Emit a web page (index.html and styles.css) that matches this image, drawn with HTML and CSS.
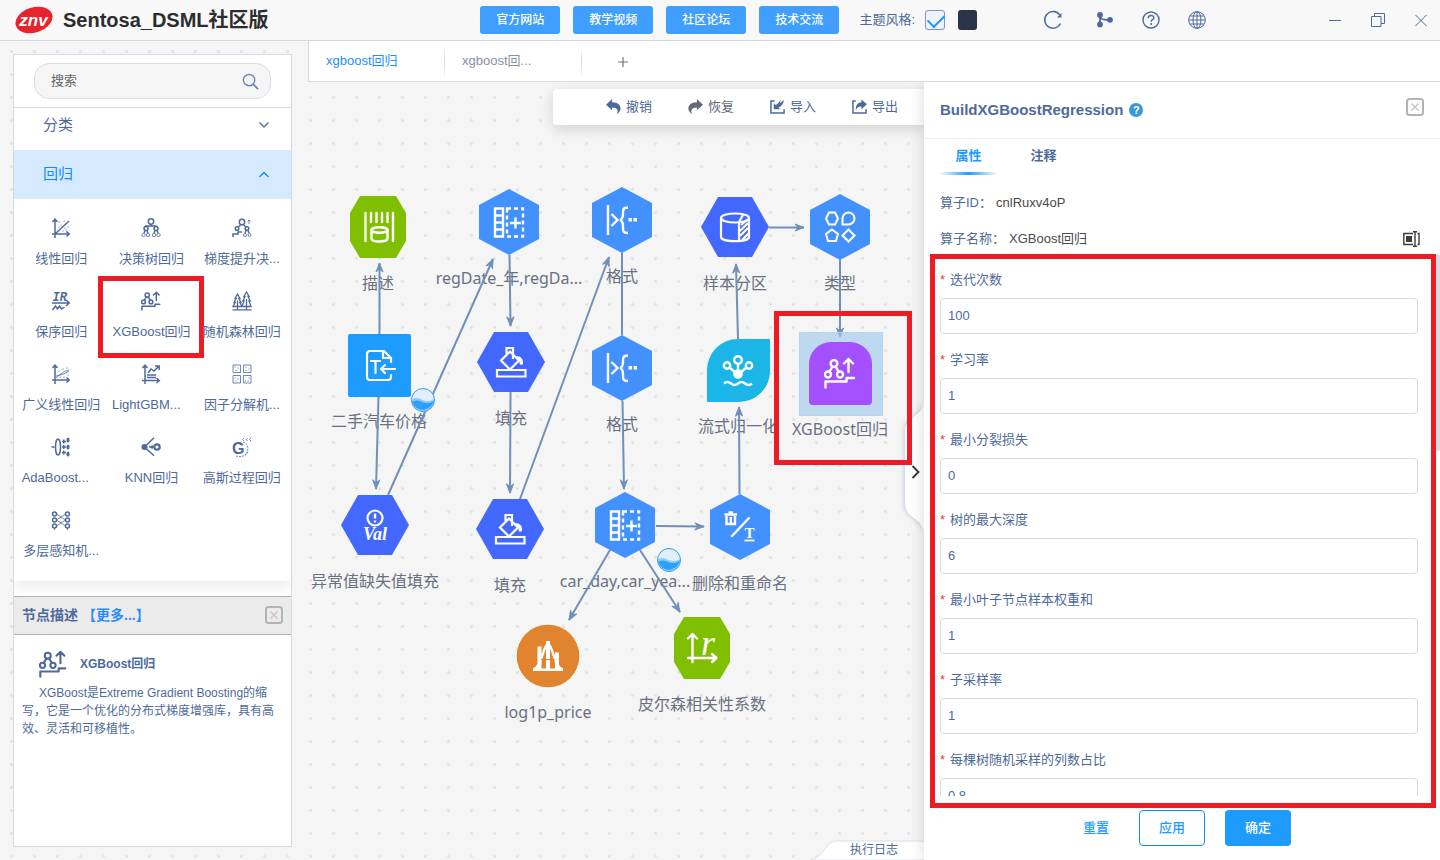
FILE: index.html
```html
<!DOCTYPE html>
<html lang="zh-CN">
<head>
<meta charset="utf-8">
<title>Sentosa_DSML社区版</title>
<link rel="stylesheet" href="styles.css">
</head>
<body>
<svg class="sprite" aria-hidden="true">
  <symbol id="i-xgb" viewBox="-16 -16 32 32"><g fill="none" stroke="currentColor" stroke-width="2.4" stroke-linecap="round" stroke-linejoin="round"><circle cx="-6" cy="-9.5" r="3.4"/><circle cx="-12" cy="1.5" r="3"/><circle cx="0" cy="1.5" r="3"/><path d="M-7.500-6.500l-3 5M-4.500-6.500l3 5M8.500-1v-13M4-9.500l4.500-4.500 4.500 4.500M-14.500 14.500v-6h21V5H14"/></g></symbol>
  <symbol id="i-cols" viewBox="-16 -16 32 32"><g fill="none" stroke="currentColor" stroke-width="2.4"><path d="M-14-13.500h8v28h-8zM-14-6.500h8M-14 .5h8M-14 7.500h8M6.500-4.500v11M1 1h11"/><path stroke-dasharray="4 3" d="M-2-13.500h16v28H-2z"/></g></symbol>
  <symbol id="i-format" viewBox="-16 -16 32 32"><g fill="none" stroke="currentColor" stroke-width="2.400"><path d="M-14-15v30M-10.500-6l6 6-6 6M6-12.500c-5 0-5 2-5 6 0 4-1 6-3 6.500 2 .5 3 2.500 3 7s0 6 5 6"/></g><path fill="currentColor" d="M6.500-2H10v3.500H6.500zM11.500-2H15v3.500h-3.500z"/></symbol>
  <symbol id="i-bucket" viewBox="-16 -16 32 32"><g fill="none" stroke="currentColor" stroke-width="2.200"><path d="M-14 8h28.500v6.500H-14zM-1-10.500l9 9-9 9-9-9zM-4.500-8v-6h6.500V-3"/></g><path fill="currentColor" d="M5-6c5 0 7.500 3 7 8-2 1.500-4 1-3.500-3z"/></symbol>
  <symbol id="i-close" viewBox="0 0 18 18"><rect x="1" y="1" width="16" height="16" rx="2.500" fill="none" stroke="#b3b3b3" stroke-width="2"/><path d="M5.500 5.500l7 7m0-7l-7 7" stroke="#d3c3c3" stroke-width="1.500"/></symbol>
</svg>

<header class="topbar">
  <div class="brand">
    <svg class="brand-logo" viewBox="0 0 38 30" role="img" aria-label="znv"><ellipse cx="19" cy="15" rx="19" ry="12.500" transform="rotate(-17 19 15)" fill="#e8232b"/><text x="18.500" y="20.500" text-anchor="middle" class="logo-text">znv</text></svg>
    <h1 class="brand-name">Sentosa_DSML社区版</h1>
  </div>
  <nav class="links">
    <button class="link-btn">官方网站</button><button class="link-btn">教学视频</button><button class="link-btn">社区论坛</button><button class="link-btn">技术交流</button>
  </nav>
  <div class="theme">
    <label for="theme-light">主题风格:</label>
    <input class="theme-check" id="theme-light" type="checkbox" checked>
    <button class="theme-dark" aria-label="深色主题"></button>
  </div>
  <div class="tools">
    <button class="icon-btn" aria-label="刷新"><svg viewBox="0 0 20 20"><path d="M17.500 13.500A8.300 8.300 0 1 1 16.800 5" fill="none" stroke="currentColor" stroke-width="1.500"/><path d="M18.500 3v4.500H14z" fill="currentColor"/></svg></button>
    <button class="icon-btn" aria-label="流程"><svg viewBox="0 0 20 20"><g fill="currentColor"><circle cx="5" cy="5" r="2.900"/><circle cx="5" cy="14.500" r="2.900"/><circle cx="15" cy="9.800" r="2.900"/></g><path d="M5 5v9.500M5 7c1 2.500 4 3 9 2.800" fill="none" stroke="currentColor" stroke-width="1.800"/></svg></button>
    <button class="icon-btn" aria-label="帮助"><svg viewBox="0 0 20 20"><circle cx="10" cy="10" r="8" fill="none" stroke="currentColor" stroke-width="1.400"/><path d="M7.300 8.200c0-3.800 5.500-3.500 5.500-.5 0 2-2.700 2-2.700 4" fill="none" stroke="currentColor" stroke-width="1.500"/><circle cx="10.100" cy="14" r="1" fill="currentColor"/></svg></button>
    <button class="icon-btn" aria-label="语言"><svg viewBox="0 0 20 20"><g fill="none" stroke="currentColor"><circle cx="10" cy="10" r="8.300"/><ellipse cx="10" cy="10" rx="4" ry="8.300"/><path d="M10 1.700v16.600M1.700 10h16.600M3 6h14M3 14h14"/></g></svg></button>
  </div>
  <div class="window">
    <button class="win-btn" aria-label="最小化"><svg viewBox="0 0 14 14"><path d="M1 7.500h12" stroke="currentColor"/></svg></button>
    <button class="win-btn" aria-label="还原"><svg viewBox="0 0 14 14"><path d="M.5 3.500h9.500v10H.5zM3.500 3.500v-3h10v10H10" fill="none" stroke="currentColor"/></svg></button>
    <button class="win-btn" aria-label="关闭"><svg viewBox="0 0 14 14"><path d="M1.500 2l11 11m0-11l-11 11" stroke="currentColor"/></svg></button>
  </div>
</header>

<main class="layout">
  <aside class="side">
    <div class="side-card">
      <div class="search">
        <div class="search-box"><input type="text" aria-label="搜索" placeholder="搜索"><svg viewBox="0 0 18 18"><circle cx="7.500" cy="7.500" r="6" fill="none" stroke="#6a86b5" stroke-width="1.500"/><path d="M12 12l5 5" stroke="#6a86b5" stroke-width="2"/></svg></div>
      </div>
      <button class="group"><span>分类</span><svg viewBox="0 0 12 12"><path d="M1.500 3.500L6 8l4.500-4.500" fill="none" stroke="currentColor" stroke-width="1.300"/></svg></button>
      <button class="group group--open"><span>回归</span><svg viewBox="0 0 12 12"><path d="M1.500 9L6 4.500 10.500 9" fill="none" stroke="currentColor" stroke-width="1.300"/></svg></button>
      <ul class="ops">
        <li class="op"><svg viewBox="0 0 20 20"><path class="ln" d="M4 20V1.500M1.500 4L4 1.200 6.500 4M1 16h17M15.500 13.500L18.300 16l-2.800 2.500M4 16L18 3"/><path class="dots" d="M8 4h.1M10 7h.1M13 3h.1M8 9h.1M12 13h.1M15 12h.1M17 9h.1M14 10h.1"/></svg><span class="op-name">线性回归</span></li>
        <li class="op"><svg viewBox="0 0 20 20"><g class="ln"><circle cx="10" cy="3.500" r="2.700"/><circle cx="5" cy="10.500" r="2"/><circle cx="15" cy="10.500" r="2"/><path d="M10 6v2H5v1M10 8h5v1M4 12.500l-1 2.500M6 12.500L7 15M14 12.500L13 15M16 12.500l1 2.500"/></g><g class="thin"><circle cx="2.500" cy="17" r="1.700"/><circle cx="7" cy="17" r="1.700"/><circle cx="13" cy="17" r="1.700"/><circle cx="17.500" cy="17" r="1.700"/></g></svg><span class="op-name">决策树回归</span></li>
        <li class="op"><svg viewBox="0 0 20 20"><g class="ln"><circle cx="10" cy="4" r="2.700"/><circle cx="5" cy="10.500" r="1.800"/><circle cx="15" cy="10.500" r="1.800"/><path d="M9 6.500L6 9M11 6.500L14 9M1 19v-3h5v-2h4M14 12.500L13 15M16 12.500l1 2.500"/></g><g class="thin"><circle cx="13" cy="17" r="1.500"/><circle cx="17.500" cy="17" r="1.500"/><path d="M17 6V2M15.500 3.500L17 2l1.500 1.500"/></g></svg><span class="op-name">梯度提升决...</span></li>
        <li class="op"><svg viewBox="0 0 20 20"><text x="1.500" y="9.500" class="ir">IR</text><path class="ln" d="M1 12h17M15 9l3.300 3L15 15M1.500 19l3-4 2 3 2-3 2 3 3-2"/></svg><span class="op-name">保序回归</span></li>
        <li class="op op--marked"><svg viewBox="-16 -16 32 32"><use href="#i-xgb" x="-16" y="-16" width="32" height="32"/></svg><span class="op-name">XGBoost回归</span></li>
        <li class="op"><svg viewBox="0 0 20 20"><path class="fir" d="M5.500 3L3 7.500h1.200L2 11.500h1.200L1 15.500h9L7.800 11.500H9L6.800 7.500H8zM14.500 1l-2.700 4.500h1.200L10.800 10H12l-2 5.500h9L17 10h1.200L16 5.500h1.200zM5.500 9.500v9M14.500 8v10.500M.5 18.800h19"/></svg><span class="op-name">随机森林回归</span></li>
        <li class="op"><svg viewBox="0 0 20 20"><path class="ln" d="M4 20V1.500M1.500 4L4 1.200 6.500 4M1 16h17M15.500 13.500L18.300 16l-2.800 2.500"/><path class="thin" d="M5 12c5-1 9-2 13-5M5 14c4-4 8-7 13-8"/><path class="dots" d="M8 7h.1M12 5h.1M16 4h.1M9 13h.1M13 13h.1M17 11h.1"/></svg><span class="op-name">广义线性回归</span></li>
        <li class="op"><svg viewBox="0 0 20 20"><path class="ln" d="M4 20V1.500M1.500 4L4 1.200 6.500 4M1 16.500h17M15.500 14l2.800 2.500-2.800 2.500M7 9l3-4 3 2 5-5M14 2h4.200v4M6 11h9M6 13.500h9"/></svg><span class="op-name op-name--cut">LightGBM...</span></li>
        <li class="op"><svg viewBox="0 0 20 20"><path class="thin" d="M1 1h7.500v7.500H1zM11.500 1H19v7.500h-7.500zM1 11.500h7.500V19H1zM11.500 11.500H19V19h-7.500z"/><path class="dots" d="M3 3h.1M6 4h.1M4 6.500h.1M14 3h.1M17 5h.1M14 6.500h.1M3 14h.1M6 15h.1M4 17h.1M13.500 17h.1M17 14h.1M16 17h.1"/></svg><span class="op-name">因子分解机...</span></li>
        <li class="op"><svg viewBox="0 0 20 20"><ellipse class="ln" cx="7" cy="10" rx="2.500" ry="8"/><path class="ln" d="M.5 10h3M11 4.500h4M11 10h4M11 15.500h4"/><path class="blob" d="M12 2.500h1.500v4H12zM12 8h1.500v4H12zM12 13.500h1.500v4H12z"/><g class="blob"><ellipse cx="17" cy="3" rx="1.600" ry="2.500"/><ellipse cx="17" cy="10" rx="1.600" ry="2.500"/><ellipse cx="17" cy="17" rx="1.600" ry="2.500"/></g></svg><span class="op-name op-name--cut">AdaBoost...</span></li>
        <li class="op"><svg viewBox="0 0 20 20"><circle class="blob" cx="3.500" cy="10" r="3"/><path class="ln" d="M3.500 10L13 .8M3.500 10l9.500 8.700M8 10h4M10.500 8.500L12 10l-1.500 1.500"/><circle cx="16" cy="10" r="2.700" fill="none" stroke="currentColor" stroke-width="2.200"/></svg><span class="op-name">KNN回归</span></li>
        <li class="op"><svg viewBox="0 0 20 20"><text x="0" y="17" class="gp">G</text><path class="thin" stroke-dasharray="2 1" d="M11 5c5 1 7 8 2 13M4 19c4 1 9 1 12-4"/><path class="thin" d="M12 1l-1.500 1.500L12 4M15.500 1L14 2.500 15.500 4M19 1l-1.500 1.500L19 4"/></svg><span class="op-name">高斯过程回归</span></li>
        <li class="op"><svg viewBox="0 0 20 20"><g class="ln"><circle cx="3.500" cy="4" r="2"/><circle cx="3.500" cy="10" r="2"/><circle cx="3.500" cy="16" r="2"/><circle cx="16.500" cy="4" r="2"/><circle cx="16.500" cy="10" r="2"/><circle cx="16.500" cy="16" r="2"/></g><path class="thin" d="M5.500 4l9 6M5.500 10l9-6M5.500 10l9 6M5.500 16l9-6M3.500 18v2M16.500 18v2"/></svg><span class="op-name">多层感知机...</span></li>
      </ul>
      <section class="about">
        <div class="about-head"><h2>节点描述</h2><a href="#more">【更多...】</a><button class="close-btn" aria-label="关闭描述"><svg viewBox="0 0 18 18"><use href="#i-close"/></svg></button></div>
        <div class="about-name"><svg viewBox="0 0 32 32"><use href="#i-xgb"/></svg><strong>XGBoost回归</strong></div>
        <p class="about-text">XGBoost是Extreme Gradient Boosting的缩写，它是一个优化的分布式梯度增强库，具有高效、灵活和可移植性。</p>
      </section>
    </div>
  </aside>

  <section class="work">
    <nav class="tabs">
      <button class="tab tab--on">xgboost回归</button>
      <button class="tab">xgboost回...</button>
      <button class="tab-add" aria-label="新建"><svg viewBox="0 0 12 12"><path d="M6 1v10M1 6h10" stroke="currentColor" stroke-width="1.200"/></svg></button>
    </nav>
    <div class="stage">
      <div class="canvas">
        <div class="toolbar">
          <button class="act"><svg viewBox="0 0 16 16"><path fill="currentColor" d="M0 6l6.500-6v3.500C13 3.500 16 7 15.500 11c-.3 2.500-2 4-4 5 2-3.500 1-7-5-7V12z"/></svg>撤销</button>
          <button class="act act--grey"><svg viewBox="0 0 16 16"><path fill="currentColor" d="M16 6L9.500 0v3.500C3 3.500 0 7 .5 11c.3 2.500 2 4 4 5-2-3.500-1-7 5-7V12z"/></svg>恢复</button>
          <button class="act"><svg viewBox="0 0 16 16"><path fill="none" stroke="currentColor" stroke-width="1.600" d="M5 2H1v13h14v-4"/><path fill="currentColor" d="M4 11V4.500l2 2C8 5.500 10 3.500 11 1c0 2 0 2.500-.5 3.500L15 1c-.5 4-3 7-6 8l2 2z"/></svg>导入</button>
          <button class="act"><svg viewBox="0 0 16 16"><path fill="none" stroke="currentColor" stroke-width="1.600" d="M4 2H1v13h14v-4"/><path fill="currentColor" d="M16 5.500L10 .5V3.500C5.500 4 4 7 4 12c1.500-3 3-4 6-4v3z"/></svg>导出</button>
        </div>

        <div class="node n-desc"><svg viewBox="-35 -35 70 70"><path fill="#7fbf00" d="M-18-31h36l10 17v28L18 31h-36l-10-17v-28z"/><g fill="none" stroke="#fff" stroke-width="2.400" stroke-linecap="round"><path d="M-12.500-14v28M15-14v28M-7-14v9M-1.500-14v9M4-14v9M9.500-14v9"/><ellipse cx="1.500" cy="3" rx="8" ry="2.800"/><path d="M-6.500 3v8.500c0 4 16 4 16 0V3"/></g></svg><span>描述</span></div>
        <div class="node n-reg"><svg viewBox="-35 -35 70 70"><path fill="#4391ff" d="M0-33l30 16v34L0 33l-30-16v-34z"/><use href="#i-cols" x="-16" y="-16" width="32" height="32"/></svg><span>regDate_年,regDa...</span></div>
        <div class="node n-fmt1"><svg viewBox="-35 -35 70 70"><path fill="#4391ff" d="M0-33l30 16v34L0 33l-30-16v-34z"/><use href="#i-format" x="-16" y="-16" width="32" height="32"/></svg><span>格式</span></div>
        <div class="node n-split"><svg viewBox="-35 -35 70 70"><path fill="#4368ff" d="M-17-30h34l17 30-17 30h-34l-17-30z"/><g fill="none" stroke="#fff" stroke-width="2.200"><ellipse cy="-9" rx="14" ry="4.500"/><path d="M-14-9v19c0 5.500 28 5.500 28 0V-9M4-5v18.500M4-5l4-7M5 4l8-8M5 9l8-8M7 13l7-7M6-2l6-5"/></g></svg><span>样本分区</span></div>
        <div class="node n-type"><svg viewBox="-35 -35 70 70"><path fill="#4391ff" d="M0-33l30 16v34L0 33l-30-16v-34z"/><g fill="none" stroke="#fff" stroke-width="2"><path d="M-11-14.500h6l3 6-3 6h-6l-3-6zM2.500-2.500V-9a6 6 0 1 1 6 6.500zM-8 2.500l6 4.500-2 7h-8l-2-7zM8.500 2.500l6 6-6 6-6-6z"/></g></svg><span>类型</span></div>
        <div class="node n-csv"><svg viewBox="-35 -35 70 70"><rect x="-31" y="-31" width="63" height="63" rx="2" fill="#1e9bff"/><g fill="none" stroke="#fff" stroke-width="2.200" stroke-linecap="round" stroke-linejoin="round"><path d="M12-3v-4l-7-7h-14q-3 0-3 3v23q0 3 3 3h18q3 0 3-3v-2M4-14v7h8M-8-4h9M-3.500-4V8M16 4H2M6 0L2 4l4 4"/></g></svg><span>二手汽车价格</span></div>
        <div class="node n-fill1"><svg viewBox="-35 -35 70 70"><path fill="#4368ff" d="M-17-30h34l17 30-17 30h-34l-17-30z"/><use href="#i-bucket" x="-16" y="-16" width="32" height="32"/></svg><span>填充</span></div>
        <div class="node n-fmt2"><svg viewBox="-35 -35 70 70"><path fill="#4391ff" d="M0-33l30 16v34L0 33l-30-16v-34z"/><use href="#i-format" x="-16" y="-16" width="32" height="32"/></svg><span>格式</span></div>
        <div class="node n-norm"><svg viewBox="-35 -35 70 70"><path fill="#1cb5e8" d="M0-31h32V0A31 31 0 0 1 1 32h-32V0A31 31 0 0 1 0-31z"/><g fill="none" stroke="#fff" stroke-width="2.400"><circle cy="-10" r="3.800"/><circle cx="-11" cy="-4.500" r="3.200"/><circle cx="11" cy="-4.500" r="3.200"/><path d="M0-6v8M-8-2l6 5M8-2L2 3M-14 13.500q3.500-3 7 0t7 0 7 0 7 0"/></g><circle cy="4" r="4.800" fill="#fff"/></svg><span>流式归一化</span></div>
        <div class="node n-val"><svg viewBox="-35 -35 70 70"><path fill="#4368ff" d="M-17-30h34l17 30-17 30h-34l-17-30z"/><circle cy="-7" r="7.500" fill="none" stroke="#fff" stroke-width="2.200"/><path d="M0-11.500v5M0-4.500v2" stroke="#fff" stroke-width="2.400"/><text y="15" text-anchor="middle" class="val">Val</text></svg><span>异常值缺失值填充</span></div>
        <div class="node n-fill2"><svg viewBox="-35 -35 70 70"><path fill="#4368ff" d="M-17-30h34l17 30-17 30h-34l-17-30z"/><use href="#i-bucket" x="-16" y="-16" width="32" height="32"/></svg><span>填充</span></div>
        <div class="node n-car"><svg viewBox="-35 -35 70 70"><path fill="#4391ff" d="M0-33l30 16v34L0 33l-30-16v-34z"/><use href="#i-cols" x="-16" y="-16" width="32" height="32"/></svg><span>car_day,car_yea...</span></div>
        <div class="node n-drop"><svg viewBox="-35 -35 70 70"><path fill="#4391ff" d="M0-33l30 16v34L0 33l-30-16v-34z"/><path d="M9-9L-8 9" stroke="#fff" stroke-width="2.400" stroke-linecap="round"/><path fill="none" stroke="#fff" stroke-width="2.400" d="M-15.500-12.500h12.500M-11.500-14.500h4.500M-13.500-11v8h8.500v-8M-9.200-10v6"/><text x="9.500" y="11" text-anchor="middle" class="tee">T</text><path stroke="#fff" stroke-width="1.800" d="M4.500 13.500h10"/></svg><span>删除和重命名</span></div>
        <div class="node n-log"><svg viewBox="-35 -35 70 70"><circle r="31.300" fill="#e08430"/><path fill="#fff" d="M-10.500-9.500h4V14h-4zM-2-15h4v29h-4zM7-3.500h4V14H7zM-15 12.500h30V15h-30z"/><path fill="none" stroke="#fff" stroke-width="2.400" d="M-14.500 13.500C-6 11-6-8 0-12.500 6-8 6 11 14.500 13.500"/><path d="M-7 3.500H7" stroke="#e08430"/></svg><span>log1p_price</span></div>
        <div class="node n-corr"><svg viewBox="-35 -35 70 70"><path fill="#7fbf00" d="M-18-31h36l10 17v28L18 31h-36l-10-17v-28z"/><path fill="none" stroke="#fff" stroke-width="2.400" stroke-linecap="round" stroke-linejoin="round" d="M-9.500 14v-28M-14-9.500l4.500-4.500 4.500 4.500M-14 10h28M10 6l4.500 4-4.500 4"/><text x="6" y="7" text-anchor="middle" class="rr">r</text></svg><span>皮尔森相关性系数</span></div>

        <svg class="edges" aria-hidden="true">
          <defs><marker id="tip" viewBox="0 0 12 10" refX="10.500" refY="5" markerWidth="12" markerHeight="10" markerUnits="userSpaceOnUse" orient="auto"><path d="M1.500 1.500L10.500 5l-9 3.500L4.500 5z" fill="#7090b8" stroke="#7090b8" stroke-linejoin="round"/></marker></defs>
          <g transform="translate(-308 -82)" fill="none" stroke="#7090b8" stroke-width="2">
            <path marker-end="url(#tip)" d="M379.500 334V263"/><path marker-end="url(#tip)" d="M378.500 397L376 489"/><path marker-end="url(#tip)" d="M388 495L493 259"/><path marker-end="url(#tip)" d="M509.500 255L510.500 326"/><path marker-end="url(#tip)" d="M510.500 392L510 493"/><path marker-end="url(#tip)" d="M520 499L609 257"/><path d="M622 253V335"/><path marker-end="url(#tip)" d="M622.500 401L624 489"/><path marker-end="url(#tip)" d="M656 526L704 526.500"/><path marker-end="url(#tip)" d="M739.500 494L739 407"/><path marker-end="url(#tip)" d="M738 339L736 264"/><path marker-end="url(#tip)" d="M769 227.500H804"/><path marker-end="url(#tip)" d="M840 260V337"/><path marker-end="url(#tip)" d="M610 550L569 620"/><path marker-end="url(#tip)" d="M640 550L680 612"/>
          </g>
        </svg>

        <div class="node node--picked n-xgb"><svg viewBox="-35 -35 70 70"><path fill="#a450ff" d="M-9-31H10A22 22 0 0 1 32-9V28q0 4-4 4h-55q-4 0-4-4V-9A22 22 0 0 1-9-31z"/><use href="#i-xgb" x="-16" y="-16" width="32" height="32"/></svg><span>XGBoost回归</span></div>
        <svg class="water w-one" viewBox="0 0 26 26"><g id="water"><circle cx="13" cy="13" r="11.500" fill="#e2eef9"/><path d="M1.500 13c4-3 7-2 11 0s8 1 12-1a11.500 11.500 0 0 1-23 1z" fill="#90c9f9"/><path d="M2 15c3-2 6-2 10 0s9 1 12-1a11.500 11.500 0 0 1-22 1z" fill="#2aa0fb"/><circle cx="13" cy="13" r="11.500" fill="none" stroke="#2aa0fb"/></g></svg>
        <svg class="water w-two" viewBox="0 0 26 26"><use href="#water"/></svg>

        <button class="log-tab"><svg viewBox="0 0 120 20" preserveAspectRatio="none"><path d="M0 20C10 18 14 10 18 5c2-3 5-4 8-4h82c6 0 8 2 12 6v13z" fill="#fff" stroke="#dcdfec"/></svg><span>执行日志</span></button>
        <button class="fold" aria-label="收起面板"><svg viewBox="0 0 20 132"><path d="M20 1C18 16 1 16 1 30v73c0 14 17 14 19 28z" fill="#fff"/><path d="M8.500 65l6 6-6 6" fill="none" stroke="#333" stroke-width="1.800"/></svg></button>
        <div class="mark mark--node"></div>
      </div>

      <aside class="panel">
        <div class="panel-head"><h2>BuildXGBoostRegression</h2><button class="help" aria-label="说明">?</button><button class="close-btn" aria-label="关闭面板"><svg viewBox="0 0 18 18"><use href="#i-close"/></svg></button></div>
        <div class="panel-tabs"><button class="ptab ptab--on">属性</button><button class="ptab">注释</button></div>
        <dl class="facts">
          <div><dt>算子ID：</dt><dd>cnlRuxv4oP</dd></div>
          <div><dt>算子名称：</dt><dd>XGBoost回归</dd><button class="rename" aria-label="重命名"><svg viewBox="0 0 18 16"><path d="M11 2.500H1.800v11H11M15.500 2.500H17v11h-1.500M13 1v14M11 .8h4M11 15.200h4" fill="none" stroke="#3c3c3c" stroke-width="1.400"/><path d="M4 5h6v6H4z" fill="#3c3c3c"/></svg></button></div>
        </dl>
        <form class="form" id="props">
          <div class="field"><label for="f1">迭代次数</label><input id="f1" type="text" value="100"></div>
          <div class="field"><label for="f2">学习率</label><input id="f2" type="text" value="1"></div>
          <div class="field"><label for="f3">最小分裂损失</label><input id="f3" type="text" value="0"></div>
          <div class="field"><label for="f4">树的最大深度</label><input id="f4" type="text" value="6"></div>
          <div class="field"><label for="f5">最小叶子节点样本权重和</label><input id="f5" type="text" value="1"></div>
          <div class="field"><label for="f6">子采样率</label><input id="f6" type="text" value="1"></div>
          <div class="field"><label for="f7">每棵树随机采样的列数占比</label><input id="f7" type="text" value="0.8"></div>
        </form>
        <div class="panel-foot"><button class="btn btn--text">重置</button><button class="btn btn--line">应用</button><button class="btn btn--fill">确定</button></div>
        <div class="scroll-thumb"></div>
        <div class="mark mark--form"></div>
      </aside>
    </div>
  </section>
</main>
</body>
</html>
```
FILE: styles.css
```css
* { box-sizing: border-box; }

body {
  margin: 0;
  height: 100vh;
  overflow: hidden;
  display: flex;
  flex-direction: column;
  font: 13px/20px "Liberation Sans", "Noto Sans CJK SC", sans-serif;
  color: #4e6a9c;
  background: #f5f5f5 radial-gradient(circle, #e3e3e3 1px, transparent 2px) 0 -6px / 23px 23px;
}

button, input { font: inherit; color: inherit; }
button { padding: 0; border: 0; background: none; cursor: pointer; }
h1, h2, p, ul, dl, dd { margin: 0; padding: 0; }
a { text-decoration: none; }
svg { display: block; flex: none; }
.sprite { position: absolute; width: 0; height: 0; }

/* top bar */
.topbar {
  flex: none;
  height: 41px;
  display: flex;
  align-items: center;
  padding: 0 12px 0 15px;
  background: #f8f8f8;
  border-bottom: 1px solid #d5d8e3;
}
.brand { display: flex; align-items: center; gap: 10px; }
.brand-logo { width: 38px; height: 30px; }
.logo-text { font: italic bold 17px "Liberation Sans", sans-serif; fill: #fff; }
.brand-name { font-size: 20px; line-height: 28px; color: #2d2d2d; }
.links { display: flex; gap: 13px; margin-left: auto; }
.link-btn { width: 80px; height: 28px; border-radius: 3px; background: #409eff; color: #fff; font-size: 12px; font-weight: 500; }
.theme { display: flex; align-items: center; margin-left: 20px; }
.theme-check {
  appearance: none;
  width: 20px;
  height: 20px;
  margin: 0 13px 0 10px;
  border: 1px solid #7f95bb;
  border-radius: 3px;
  background: #eef2fb;
}
.theme-check::after {
  content: "";
  display: block;
  width: 14px;
  height: 8px;
  margin: 3px 0 0 2px;
  border: solid #1e9bff;
  border-width: 0 0 2px 2px;
  transform: rotate(-45deg);
}
.theme-dark { width: 19px; height: 20px; border-radius: 3px; background: #2b3348; }
.tools { display: flex; gap: 26px; margin-left: 66px; }
.icon-btn:first-child { margin-right: 6px; }
.icon-btn svg { width: 20px; height: 20px; }
.window { display: flex; gap: 29px; margin-left: 121px; }
.win-btn svg { width: 14px; height: 14px; }

/* page columns */
.layout { flex: 1; min-height: 0; display: grid; grid-template: minmax(0, 1fr) / 308px 1fr; }
.side { padding: 13px 16px 13px 13px; min-height: 0; display: flex; }
.side-card { flex: 1; display: flex; flex-direction: column; background: #fff; border: 1px solid #d5d9e5; }
.search { padding: 8px 20px; border-bottom: 1px solid #d5d9e5; }
.search-box {
  height: 36px;
  display: flex;
  align-items: center;
  padding: 0 11px 0 16px;
  border: 1px solid #d9dbe8;
  border-radius: 15px;
  background: #f5f5f5;
}
.search-box input { flex: 1; min-width: 0; padding: 0; border: 0; outline: 0; background: none; }
.search-box input::placeholder { color: #666; }
.search-box svg { width: 17px; height: 17px; }
.group {
  flex: none;
  display: flex;
  align-items: center;
  justify-content: space-between;
  height: 42px;
  padding: 0 21px 8px 29px;
  font-size: 15px;
}
.group svg { width: 12px; height: 12px; }
.group--open { height: 49px; padding-bottom: 2px; background: #d6eaff; color: #0d8cff; }
.ops {
  list-style: none;
  display: grid;
  grid-template-columns: repeat(3, 1fr);
  padding: 0 4px 17px 2px;
  box-shadow: 0 6px 14px rgba(0, 0, 0, .08);
  clip-path: inset(0 0 -15px 0);
  margin-bottom: 15px;
}
.op { position: relative; display: flex; flex-direction: column; align-items: center; gap: 11px; padding: 19px 0 3px; }
.op svg { width: 20px; height: 20px; }
.op-name { width: 79px; white-space: nowrap; text-align: center; }
.op-name--cut { text-align: left; }
.op--marked::after { content: ""; position: absolute; inset: 4px -7px -13px -8px; border: 5px solid #ed1c24; }
.ln { fill: none; stroke: currentColor; stroke-width: 1.5; }
.fir { fill: none; stroke: currentColor; stroke-width: 1.3; }
.thin { fill: none; stroke: currentColor; stroke-width: .8; }
.dots { fill: none; stroke: currentColor; stroke-width: 1.2; stroke-linecap: round; }
.blob { fill: currentColor; }
.ir { font: italic bold 12px "Liberation Mono", monospace; fill: currentColor; }
.gp { font: bold 16px "Liberation Sans", sans-serif; fill: currentColor; }

.about { flex: 1; min-height: 0; }
.about-head {
  height: 39px;
  display: flex;
  align-items: center;
  padding: 0 8px 1px;
  background: #ebebeb;
  border: solid #b4b4b0;
  border-width: 1px 0;
}
.about-head h2 { font-size: 14px; font-weight: 700; line-height: 20px; }
.about-head a { margin-left: 4px; font-size: 14px; font-weight: 700; color: #2b8bff; }
.close-btn { margin-left: auto; }
.close-btn svg { width: 18px; height: 18px; }
.about-name { display: flex; align-items: center; gap: 13px; padding: 15px 0 6px 25px; font-size: 12px; }
.about-name svg { width: 28px; height: 28px; }
.about-text { padding: 0 15px 0 8px; font-size: 12px; line-height: 18px; text-indent: 17px; }

/* tabs */
.work { min-width: 0; display: flex; flex-direction: column; }
.tabs { flex: none; height: 41px; display: flex; background: #fff; border: solid #d5d9e5; border-width: 0 0 1px 1px; }
.tab {
  width: 136px;
  padding: 0 0 1px 17px;
  text-align: left;
  color: #8791a8;
  border-right: 1px solid;
  border-image: linear-gradient(#fff 15%, #d5d8ea 50%, #fff 95%) 1;
}
.tab + .tab { width: 137px; }
.tab--on { color: #1a90ff; }
.tab-add { width: 82px; color: #777; }
.tab-add svg { width: 12px; height: 12px; margin: 2px auto 0; }

/* canvas */
.stage { flex: 1; min-height: 0; display: grid; grid-template: minmax(0, 1fr) / 1fr 516px; }
.canvas { position: relative; overflow: hidden; min-width: 0; }
.toolbar {
  width: fit-content;
  margin: 7px 0 0 auto;
  display: flex;
  gap: 36px;
  height: 36px;
  padding: 0 26px 1px 53px;
  background: #fff;
  border-radius: 4px 0 0 4px;
  box-shadow: 0 4px 14px rgba(0, 0, 0, .15);
}
.act { display: flex; align-items: center; gap: 5px; }
.act--grey { color: #666a78; }
.act svg { width: 15px; height: 15px; }
.edges { position: absolute; inset: 0; width: 100%; height: 100%; }
.node {
  position: absolute;
  width: 160px;
  margin: -35px 0 0 -80px;
  display: flex;
  flex-direction: column;
  align-items: center;
  gap: 10px;
  font: 16px/22px "Noto Sans", "Noto Sans CJK SC", sans-serif;
  color: #6a7082;
  white-space: nowrap;
}
.node svg { width: 70px; height: 70px; color: #fff; }
.node--picked::before {
  content: "";
  position: absolute;
  left: 39px;
  top: -6px;
  width: 82px;
  height: 82px;
  background: rgba(160, 199, 236, .65);
  border: 1px solid #b9d3ef;
}
.node--picked svg { position: relative; }
.n-desc { left: 70px; top: 145px; }
.n-reg { left: 201px; top: 140px; }
.n-fmt1 { left: 314px; top: 138px; }
.n-split { left: 427px; top: 145px; }
.n-type { left: 532px; top: 145px; }
.n-csv { left: 71px; top: 283px; }
.n-fill1 { left: 203px; top: 280px; }
.n-fmt2 { left: 314px; top: 286px; }
.n-norm { left: 430px; top: 288px; }
.n-xgb { left: 532px; top: 291px; }
.n-val { left: 67px; top: 443px; }
.n-fill2 { left: 202px; top: 447px; }
.n-car { left: 317px; top: 443px; }
.n-drop { left: 432px; top: 445px; }
.n-log { left: 240px; top: 574px; }
.n-corr { left: 394px; top: 566px; }
.val { font: italic bold 18px "Liberation Serif", serif; fill: #fff; }
.tee { font: bold 15px "Liberation Serif", serif; fill: #fff; }
.rr { font: italic 36px "Liberation Serif", serif; fill: #fff; }
.water { position: absolute; width: 26px; height: 26px; }
.w-one { left: 102px; top: 305px; }
.w-two { left: 348px; top: 465px; }
.log-tab { position: absolute; right: -6px; bottom: 0; width: 120px; height: 20px; font-size: 12px; line-height: 18px; }
.log-tab svg { position: absolute; inset: 0; width: 100%; height: 100%; }
.log-tab span { position: relative; margin-left: 8px; }
.fold { position: absolute; right: 0; top: 319px; }
.fold svg { width: 20px; height: 132px; filter: drop-shadow(-1px 0 2px rgba(100, 110, 170, .35)); }
.mark { position: absolute; border: 5px solid #ed1c24; pointer-events: none; }
.mark--node { left: 466px; top: 229px; width: 138px; height: 154px; }

/* property panel */
.panel {
  position: relative;
  min-height: 0;
  display: flex;
  flex-direction: column;
  background: #fff;
  box-shadow: -2px 0 12px rgba(0, 0, 0, .12);
  clip-path: inset(0 0 0 -20px);
}
.panel-head { flex: none; height: 57px; display: flex; align-items: center; padding: 0 16px; border-bottom: 1px solid #eee; }
.panel-head h2 { font-size: 15px; line-height: 20px; }
.panel-head .close-btn { margin-bottom: 7px; }
.help { width: 14px; height: 14px; margin-left: 6px; border-radius: 50%; background: #3a97d9; color: #fff; font-size: 11px; font-weight: 700; line-height: 14px; }
.panel-tabs { display: flex; gap: 18px; padding: 0 16px; }
.ptab { width: 57px; height: 36px; padding-top: 1px; font-weight: 700; border-bottom: 3px solid transparent; }
.ptab--on { color: #1e9bff; border-image: linear-gradient(90deg, #fff, #1e9bff 50%, #fff) 1; }
.facts { padding: 18px 20px 0 16px; display: grid; gap: 16px; }
.facts div { display: flex; align-items: center; }
.facts dd { margin-left: 4px; color: #4a4a4a; }
.rename { margin-left: auto; }
.rename svg { width: 18px; height: 16px; }
.form { flex: 1; min-height: 0; overflow: hidden; margin-top: 21px; padding: 0 22px 0 16px; }
.field { display: flex; flex-direction: column; gap: 8px; padding-bottom: 16px; }
.field label::before { content: "*"; margin-right: 5px; color: #f03a3a; }
.field input { height: 36px; padding: 0 7px 2px; border: 1px solid #d5dae5; border-radius: 4px; background: #fff; outline: 0; }
.panel-foot { flex: none; display: flex; justify-content: center; gap: 20px; padding: 14px 0; }
.btn { width: 66px; height: 36px; border-radius: 4px; font-weight: 500; color: #1e9bff; }
.btn--text { width: 46px; }
.btn--line { border: 1px solid #0d8cff; }
.btn--fill { background: #1e9bff; color: #fff; }
.scroll-thumb { position: absolute; right: 0; top: 172px; width: 5px; height: 197px; border-radius: 3px; background: #d8dce6; }
.mark--form { left: 6px; right: 4px; top: 172px; bottom: 52px; }
```
